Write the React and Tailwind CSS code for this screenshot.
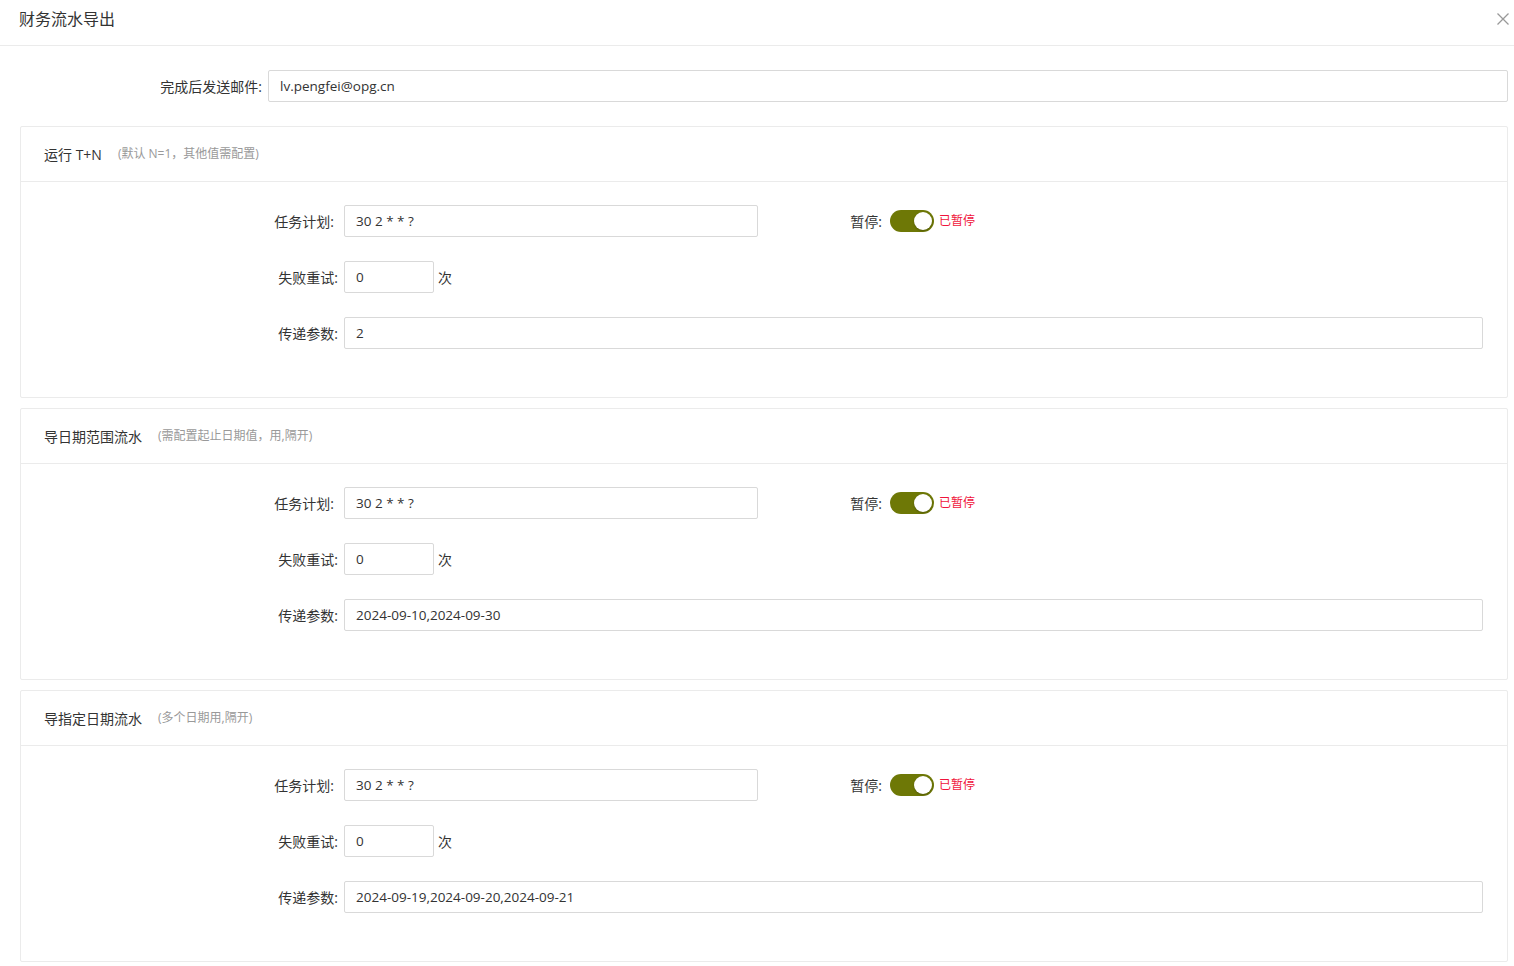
import React from "react";

const font = { fontFamily: '"Open Sans", "Noto Sans CJK SC", sans-serif' };

function Toggle() {
  return (
    <div className="flex items-center">
      <div className="relative w-[44px] h-[22px] rounded-full bg-[#6e7806]">
        <div className="absolute right-[2px] top-[2px] w-[18px] h-[18px] rounded-full bg-white shadow-[0_1px_2px_rgba(0,0,0,0.25)]" />
      </div>
      <span className="ml-[5px] text-[12px] text-[#f0143c]">已暂停</span>
    </div>
  );
}

function Input({ value, className }) {
  return (
    <div
      className={
        "h-[32px] border border-[#d9d9d9] rounded-[2px] px-[11px] flex items-center text-[13.5px] text-[#333] bg-white " +
        className
      }
    >
      {value}
    </div>
  );
}

function Label({ children, className }) {
  return <div className={"text-right text-[14px] text-[#333] " + className}>{children}</div>;
}

function Section({ title, hint, param }) {
  return (
    <div className="ml-[20px] mr-[6px] border border-[#ebebeb] rounded-[2px]">
      <div className="h-[55px] border-b border-[#ebebeb] flex items-center pl-[23px]">
        <span className="text-[14px] text-[#333]">{title}</span>
        <span className="ml-[16px] text-[12px] text-[#999]">{hint}</span>
      </div>
      <div className="pt-[23px] pb-[24px]">
        <div className="flex items-center h-[32px] mb-[24px]">
          <Label className="w-[323px] pr-[10px]">任务计划:</Label>
          <Input value="30 2 * * ?" className="w-[414px]" />
          <Label className="w-[132px] pr-[8px]">暂停:</Label>
          <Toggle />
        </div>
        <div className="flex items-center h-[32px] mb-[24px]">
          <Label className="w-[323px] pr-[6px]">失败重试:</Label>
          <Input value="0" className="w-[90px]" />
          <span className="ml-[4px] text-[14px] text-[#333]">次</span>
        </div>
        <div className="flex items-center h-[32px] mb-[24px] pr-[24px]">
          <Label className="w-[323px] pr-[6px]">传递参数:</Label>
          <Input value={param} className="flex-1" />
        </div>
      </div>
    </div>
  );
}

export default function App() {
  return (
    <div className="w-[1514px] h-[966px] bg-white overflow-hidden" style={font}>
      <div className="h-[46px] border-b border-[#ebebeb] flex items-center justify-between pl-[19px] pr-[4px] pb-[8px]">
        <span className="text-[16px] text-[#333]">财务流水导出</span>
        <svg width="14" height="14" viewBox="0 0 14 14" className="text-[#999]">
          <path d="M1.5 1.5 L12.5 12.5 M12.5 1.5 L1.5 12.5" stroke="currentColor" strokeWidth="1.3" fill="none" />
        </svg>
      </div>
      <div className="flex items-center h-[32px] mt-[24px] mb-[24px] pr-[6px]">
        <Label className="w-[268px] pr-[6px]">完成后发送邮件:</Label>
        <Input value="lv.pengfei@opg.cn" className="flex-1" />
      </div>
      <div className="flex flex-col gap-[10px]">
        <Section title="运行 T+N" hint="(默认 N=1，其他值需配置)" param="2" />
        <Section title="导日期范围流水" hint="(需配置起止日期值，用,隔开)" param="2024-09-10,2024-09-30" />
        <Section title="导指定日期流水" hint="(多个日期用,隔开)" param="2024-09-19,2024-09-20,2024-09-21" />
      </div>
    </div>
  );
}
